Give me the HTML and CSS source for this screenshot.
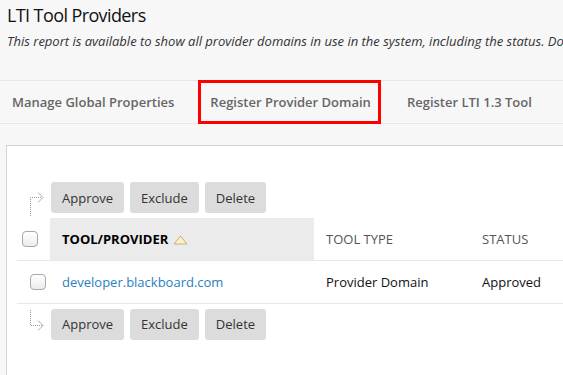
FILE: index.html
```html
<!DOCTYPE html>
<html lang="en">
<head>
    <meta charset="UTF-8">
    <title>LTI Tool Providers</title>
    <link rel="stylesheet" href="styles.css">
</head>
<body>
    <header class="page-head">
        <h1>LTI Tool Providers</h1>
        <p>This report is available to show all provider domains in use in the system, including the status. Domains can be approved or excluded here.</p>
    </header>

    <nav class="tabs">
        <a class="tab">Manage Global Properties</a>
        <a class="tab marked">Register Provider Domain</a>
        <a class="tab">Register LTI 1.3 Tool</a>
    </nav>

    <div class="panel">
        <div class="list">
            <!-- Actions above the list -->
            <div class="actions top">
                <svg class="arrow" width="34" height="31" viewBox="0 0 34 31">
                    <path d="M13.5 34 V15.5 H25" />
                    <path d="M21 10.5 L26 15.5 L21 20.5" />
                </svg>
                <button>Approve</button>
                <button>Exclude</button>
                <button>Delete</button>
            </div>

            <table class="grid">
                <thead>
                    <tr>
                        <th class="check-col"><input type="checkbox" class="check head-check"></th>
                        <th class="sorted">Tool/Provider <svg class="sort" width="15" height="10" viewBox="0 0 15 10"><path d="M7.5 1 L14 9 H1 Z" /></svg></th>
                        <th class="type-col">Tool Type</th>
                        <th>Status</th>
                    </tr>
                </thead>
                <tbody>
                    <tr>
                        <td class="check-col"><input type="checkbox" class="check row-check"></td>
                        <td><a class="link">developer.blackboard.com</a></td>
                        <td>Provider Domain</td>
                        <td>Approved</td>
                    </tr>
                </tbody>
            </table>

            <!-- Actions below the list -->
            <div class="actions bottom">
                <svg class="arrow" width="34" height="31" viewBox="0 0 34 31">
                    <path d="M13.5 1 V16.5 H25" />
                    <path d="M21 11.5 L26 16.5 L21 21.5" />
                </svg>
                <button>Approve</button>
                <button>Exclude</button>
                <button>Delete</button>
            </div>
        </div>
    </div>
</body>
</html>
```

FILE: styles.css
```css
* {
    margin: 0;
    padding: 0;
    box-sizing: border-box;
}

body {
    background: #f7f7f7;
    font-family: 'Open Sans', sans-serif;
    color: #333;
    overflow: hidden;
    height: 375px;
}

.page-head {
    padding: 3px 7px 0;
    white-space: nowrap;
    overflow: hidden;
}

h1 {
    font-size: 18px;
    line-height: 25px;
    font-weight: 400;
    letter-spacing: -0.6px;
    color: #111;
}

.page-head p {
    margin-top: 4px;
    font-size: 13px;
    font-style: italic;
    color: #333;
}

.tabs {
    display: flex;
    align-items: center;
    gap: 36px;
    height: 44px;
    margin-top: 30px;
    padding-left: 12px;
    border-top: 1px solid #e6e6e6;
    border-bottom: 1px solid #e6e6e6;
    white-space: nowrap;
}

.tab {
    font-size: 13px;
    font-weight: 600;
    color: #666;
}

.tab.marked {
    padding: 10px 7px 10px 9px;
    margin: 0 -7px 0 -9px;
    outline: 3px solid #f00;
}

.panel {
    margin: 21px -20px 0 6px;
    height: 240px;
    background: #fff;
    border: 1px solid #d4d4d4;
}

.list {
    margin-left: 10px;
    padding-top: 36px;
}

.actions {
    display: flex;
    gap: 6px;
}

.arrow {
    flex: none;
    margin-right: -6px;
    overflow: visible;
}

.arrow path {
    fill: none;
    stroke: #999;
    stroke-width: 1;
    stroke-dasharray: 1 1;
}

.arrow path + path {
    stroke-dasharray: none;
    stroke: #aaa;
}

.actions button {
    height: 31px;
    padding: 0 11px;
    background: #dcdcdc;
    border: none;
    border-radius: 3px;
    font-family: 'Open Sans', sans-serif;
    font-size: 13px;
    color: #333;
}

.actions.top {
    margin-bottom: 5px;
}

.actions.bottom {
    margin-top: 5px;
}

.grid {
    width: 560px;
    border-collapse: collapse;
    font-size: 13px;
}

.grid th {
    height: 42px;
    padding-left: 12px;
    text-align: left;
    font-weight: 400;
    text-transform: uppercase;
    color: #555;
    border-bottom: 1px solid #e8e8e8;
    white-space: nowrap;
}

.grid th.sorted {
    width: 264px;
    background: #ebebeb;
    font-weight: 700;
    color: #000;
}

.grid th.type-col {
    width: 156px;
}

.grid .check-col {
    width: 33px;
    padding-left: 0;
}

.grid td {
    height: 43px;
    padding-left: 12px;
    color: #111;
    border-bottom: 1px solid #e8e8e8;
    white-space: nowrap;
}

.sort {
    vertical-align: -1px;
    margin-left: 1px;
}

.sort path {
    fill: #fcefc6;
    stroke: #c4b184;
    stroke-width: 1;
}

.check {
    appearance: none;
    display: block;
    width: 16px;
    height: 16px;
    border: 1px solid #a8a8a8;
    border-radius: 4px;
    background: linear-gradient(#fff, #ececec);
}

.head-check {
    margin-left: 5px;
}

.row-check {
    margin-left: 13px;
}

.link {
    color: #2a80c2;
}
```
